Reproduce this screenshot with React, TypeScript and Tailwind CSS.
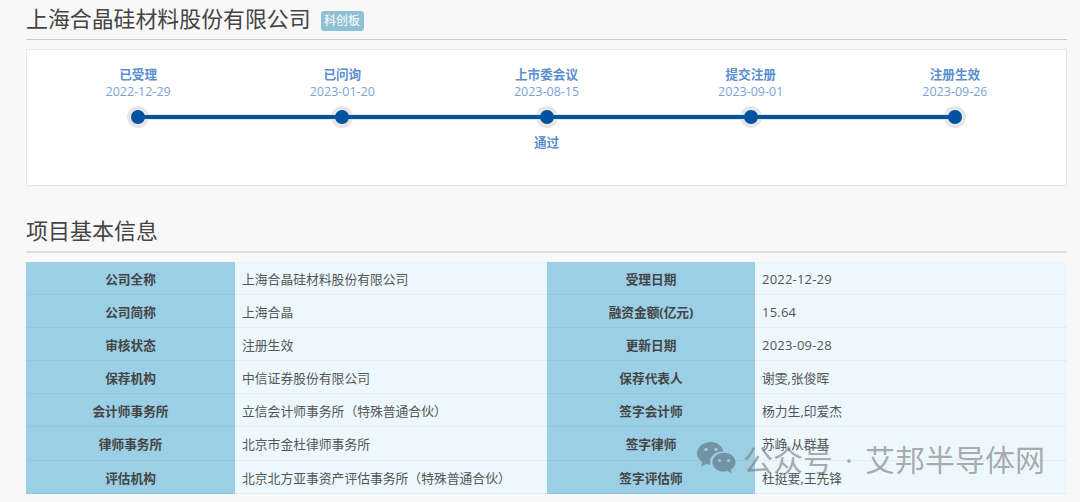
const rows = [
  ["公司全称", "上海合晶硅材料股份有限公司", "受理日期", "2022-12-29"],
  ["公司简称", "上海合晶", "融资金额(亿元)", "15.64"],
  ["审核状态", "注册生效", "更新日期", "2023-09-28"],
  ["保荐机构", "中信证券股份有限公司", "保荐代表人", "谢雯,张俊晖"],
  ["会计师事务所", "立信会计师事务所（特殊普通合伙）", "签字会计师", "杨力生,印爱杰"],
  ["律师事务所", "北京市金杜律师事务所", "签字律师", "苏峥,从群基"],
  ["评估机构", "北京北方亚事资产评估事务所（特殊普通合伙）", "签字评估师", "杜挺要,王先锋"],
];

const steps = [
  ["已受理", "2022-12-29", ""],
  ["已问询", "2023-01-20", ""],
  ["上市委会议", "2023-08-15", "通过"],
  ["提交注册", "2023-09-01", ""],
  ["注册生效", "2023-09-26", ""],
];

function Step({ s, i }: { s: string[]; i: number }) {
  return (
    <div className="flex-1 flex flex-col items-center">
      <div className="text-[12.6px] leading-[17px] font-bold text-[#5a8fd0]">{s[0]}</div>
      <div className="text-[12.5px] leading-[17px] text-[#7ba3d9]">{s[1]}</div>
      <div className="relative w-full h-[22px] mt-[6px] flex items-center justify-center">
        <div className="absolute w-[22px] h-[22px] rounded-full bg-[#e6e6e6]" />
        {i < 4 && <div className="absolute z-[1] left-1/2 w-full top-[8px] h-[6px] bg-[#e2e4e8]" />}
        {i < 4 && <div className="absolute z-[2] left-1/2 w-full top-[9px] h-[4px] bg-[#00549f]" />}
        <div className="relative z-[3] w-[14px] h-[14px] rounded-full bg-[#00549f]" />
      </div>
      <div className="mt-[6px] text-[12.6px] leading-[17px] font-bold text-[#5a8fd0]">{s[2]}</div>
    </div>
  );
}

function Label({ t }: { t: string }) {
  return (
    <div className="h-[33.1px] pt-[3px] bg-[#9bcfe5] border-b border-[#92c6dc] flex items-center justify-center text-[12.7px] font-bold text-[#444444]">
      {t}
    </div>
  );
}

function Val({ t }: { t: string }) {
  const numeric = /^[0-9.-]+$/.test(t);
  return (
    <div
      className={
        "h-[33.1px] pt-[3px] bg-[#ecf8fe] border-b border-[#e2eef3] flex items-center pl-[7px] text-[#555555] " +
        (numeric ? "text-[13px] tracking-[0.2px]" : "text-[12.8px]")
      }
    >
      {t}
    </div>
  );
}

export default function App() {
  return (
    <div
      className="relative w-[1080px] h-[502px] overflow-hidden bg-[#f8f8f8] pl-[26px] pr-[13px]"
      style={{ fontFamily: '"Open Sans", "Noto Sans CJK SC", sans-serif' }}
    >
      <div className="h-[40px] border-b border-[#cccccc] flex items-center gap-[10px] pb-[1px]">
        <span className="text-[21.9px] leading-none text-[#444444]">上海合晶硅材料股份有限公司</span>
        <span className="mt-[3px] h-[20px] w-[43px] rounded-[3px] bg-[#8fc1d4] text-white text-[12px] flex items-center justify-center">科创板</span>
      </div>
      <div className="mt-[9px] h-[137px] border border-[#e6e6e6] bg-white px-[9px] pt-[16px] flex">
        {steps.map((s, i) => (
          <Step key={i} s={s} i={i} />
        ))}
      </div>
      <div className="mt-[27px] h-[40px] border-b-2 border-[#dddddd] text-[22px] leading-[35px] text-[#444444]">项目基本信息</div>
      <div className="mt-[9px] grid grid-cols-[209px_312px_208px_312px]">
        {rows.map((r, i) => [
          <Label key={i + "a"} t={r[0]} />,
          <Val key={i + "b"} t={r[1]} />,
          <Label key={i + "c"} t={r[2]} />,
          <Val key={i + "d"} t={r[3]} />,
        ])}
      </div>
      <div className="absolute left-[696px] top-[440px] flex items-center text-[#777777]/60">
        <svg width="40" height="36" viewBox="0 0 40 36" fill="#6f8f9f" fillOpacity="0.95">
          <path d="M15 2C7.3 2 1 7 1 13.3c0 3.6 2.1 6.7 5.3 8.8L5 26.5l5-2.6c1.5.4 3 .6 4.4.7-.3-1-.4-1.9-.4-2.8 0-5.8 5.6-10.4 12.3-10.4h1.2C26.2 6 21.1 2 15 2z" />
          <path d="M39.5 22.2c0-5.2-5.2-9.4-11.5-9.4s-11.5 4.2-11.5 9.4S21.7 31.6 28 31.6c1.3 0 2.6-.2 3.8-.5l3.9 2.2-1-3.6c2.9-1.8 4.8-4.4 4.8-7.5z" />
          <circle cx="10" cy="9.5" r="1.8" fill="#9bcfe5" />
          <circle cx="20" cy="9.5" r="1.8" fill="#9bcfe5" />
          <circle cx="23.5" cy="20.5" r="1.6" fill="#9bcfe5" />
          <circle cx="32.5" cy="20.5" r="1.6" fill="#9bcfe5" />
        </svg>
        <span className="ml-[7px] mt-[3px] text-[30px] leading-none">公众号</span>
        <span className="ml-[12px] mt-[3px] text-[30px] leading-none w-[6px]">·</span>
        <span className="ml-[14px] mt-[3px] text-[30px] leading-none">艾邦半导体网</span>
      </div>
    </div>
  );
}
